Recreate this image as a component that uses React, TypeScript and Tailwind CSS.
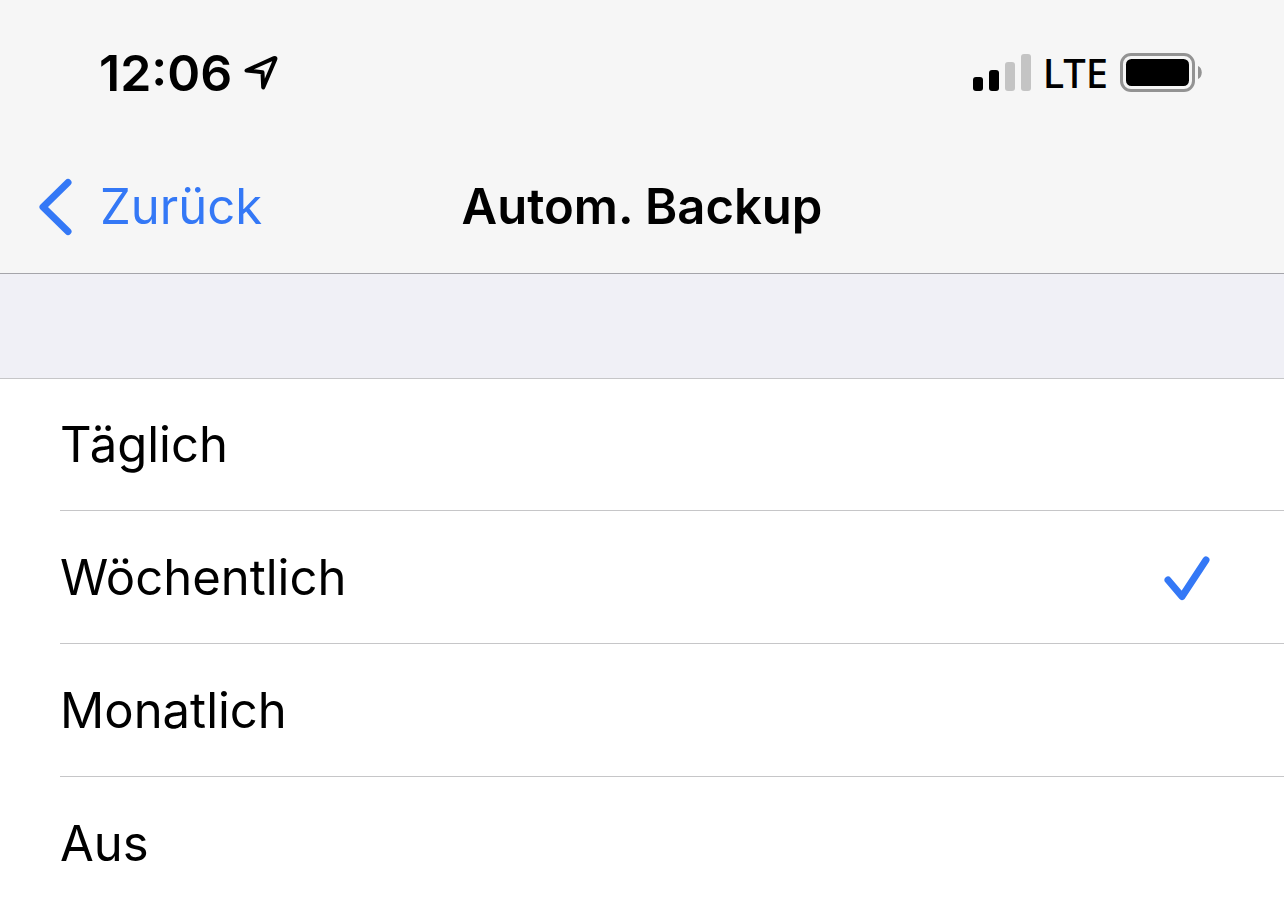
import { useState } from "react";

const intervals = ["Täglich", "Wöchentlich", "Monatlich", "Aus"];

function LocationIcon() {
  return (
    <svg width="34" height="36" viewBox="0 0 34 36" fill="none" aria-hidden="true">
      <path
        d="M2.5 15.5 L30 3.2 Q32 2.4 31.2 4.4 L19.2 32.5 L18.5 17.3 Z"
        stroke="black"
        strokeWidth="4"
        strokeLinecap="round"
        strokeLinejoin="round"
      />
    </svg>
  );
}

function SignalIcon() {
  return (
    <svg width="58" height="38" viewBox="0 0 58 38" aria-hidden="true">
      <rect x="0" y="23" width="10" height="14" rx="3" fill="black" />
      <rect x="16" y="16" width="10" height="21" rx="3" fill="black" />
      <rect x="32" y="8" width="10" height="29" rx="3" fill="#c4c4c4" />
      <rect x="48" y="0" width="10" height="37" rx="3" fill="#c4c4c4" />
    </svg>
  );
}

function BatteryIcon() {
  return (
    <svg width="82" height="40" viewBox="0 0 82 40" aria-hidden="true">
      <rect x="1.5" y="1.5" width="72" height="36" rx="9.5" fill="none" stroke="#939393" strokeWidth="3" />
      <rect x="6" y="6" width="63" height="27" rx="5.5" fill="black" />
      <path d="M78 13 C83 15 83 24 78 26 Z" fill="#939393" />
    </svg>
  );
}

function BackIcon() {
  return (
    <svg width="34" height="58" viewBox="0 0 34 58" fill="none" aria-hidden="true">
      <path d="M30 4.5 L5 29 L30 53.5" stroke="#3478f6" strokeWidth="7" strokeLinecap="round" strokeLinejoin="round" />
    </svg>
  );
}

function CheckIcon() {
  return (
    <svg width="46" height="46" viewBox="0 0 46 46" fill="none" aria-hidden="true">
      <path d="M4 25 L18 41.5 L42 5" stroke="#3478f6" strokeWidth="7" strokeLinecap="round" strokeLinejoin="round" />
    </svg>
  );
}

function StatusBar() {
  return (
    <div className="flex h-[141px] items-center justify-between pt-1 pr-[82px] pl-[99px]">
      <div className="flex items-center gap-3">
        <span className="text-[50px] leading-[60px] font-semibold">12:06</span>
        <LocationIcon />
      </div>
      <div className="flex items-center">
        <SignalIcon />
        <span className="mx-3 font-['Noto_Sans',sans-serif] text-[40px] leading-[60px] font-medium">LTE</span>
        <BatteryIcon />
      </div>
    </div>
  );
}

function NavBar() {
  return (
    <header className="grid h-[133px] grid-cols-[1fr_auto_1fr] items-center border-b border-[#a5a5aa] px-[38px]">
      <button type="button" className="flex items-center gap-7 justify-self-start text-[49px] leading-[60px] text-[#3478f6]">
        <BackIcon />
        Zurück
      </button>
      <h1 className="text-[49px] leading-[60px] font-semibold">Autom. Backup</h1>
    </header>
  );
}

export default function App() {
  const [selected, setSelected] = useState("Wöchentlich");

  return (
    <div className="min-h-screen bg-white font-[Inter,sans-serif] text-black">
      <div className="bg-[#f6f6f6]">
        <StatusBar />
        <NavBar />
      </div>
      <div className="h-[105px] border-b border-[#c6c6c8] bg-[#f0f0f6]" />
      <fieldset aria-label="Autom. Backup" className="pl-[60px]">
        {intervals.map((interval) => (
          <label
            key={interval}
            className="relative flex cursor-pointer items-center justify-between border-b border-[#c6c6c8] pt-[37px] pr-[74px] pb-[35px] first:pt-9 last:border-b-0 last:pb-6"
          >
            <span className="text-[49px] leading-[60px]">{interval}</span>
            <input
              type="radio"
              name="interval"
              value={interval}
              checked={selected === interval}
              onChange={() => setSelected(interval)}
              className="sr-only"
            />
            {selected === interval && <CheckIcon />}
          </label>
        ))}
      </fieldset>
    </div>
  );
}
